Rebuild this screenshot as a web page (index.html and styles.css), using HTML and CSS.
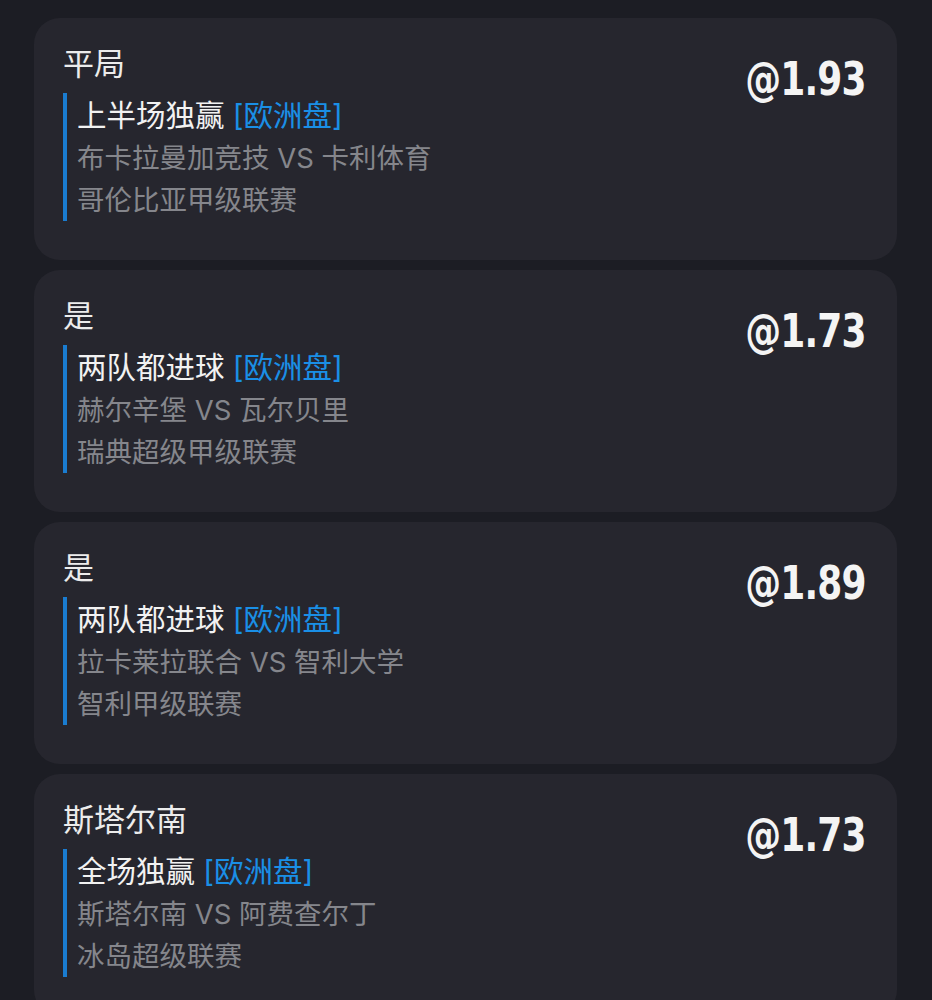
FILE: index.html
```html
<!DOCTYPE html>
<html lang="zh">
<head>
<meta charset="utf-8">
<link rel="stylesheet" href="styles.css">
</head>
<body>
<div class="list">
  <div class="card">
    <div class="info">
      <div class="pick">平局</div>
      <div class="detail">
        <div class="market">上半场独赢 <span class="tag">[欧洲盘]</span></div>
        <div class="match">布卡拉曼加竞技 VS 卡利体育</div>
        <div class="league">哥伦比亚甲级联赛</div>
      </div>
    </div>
    <div class="odds">@1.93</div>
  </div>
  <div class="card">
    <div class="info">
      <div class="pick">是</div>
      <div class="detail">
        <div class="market">两队都进球 <span class="tag">[欧洲盘]</span></div>
        <div class="match">赫尔辛堡 VS 瓦尔贝里</div>
        <div class="league">瑞典超级甲级联赛</div>
      </div>
    </div>
    <div class="odds">@1.73</div>
  </div>
  <div class="card">
    <div class="info">
      <div class="pick">是</div>
      <div class="detail">
        <div class="market">两队都进球 <span class="tag">[欧洲盘]</span></div>
        <div class="match">拉卡莱拉联合 VS 智利大学</div>
        <div class="league">智利甲级联赛</div>
      </div>
    </div>
    <div class="odds">@1.89</div>
  </div>
  <div class="card">
    <div class="info">
      <div class="pick">斯塔尔南</div>
      <div class="detail">
        <div class="market">全场独赢 <span class="tag">[欧洲盘]</span></div>
        <div class="match">斯塔尔南 VS 阿费查尔丁</div>
        <div class="league">冰岛超级联赛</div>
      </div>
    </div>
    <div class="odds">@1.73</div>
  </div>
</div>
</body>
</html>
```

FILE: styles.css
```css
html, body {
  margin: 0;
  padding: 0;
  background: #1c1d24;
}
body {
  font-family: "Inter", "Noto Sans CJK SC", "Noto Sans", sans-serif;
  height: 1000px;
  overflow: hidden;
}
.list {
  display: flex;
  flex-direction: column;
  gap: 10px;
  padding: 18px 35px 0 34px;
}
.card {
  background: #26262e;
  border-radius: 26px;
  height: 242px;
  box-sizing: border-box;
  padding: 25px 31px 0 29px;
  display: flex;
  justify-content: space-between;
  align-items: flex-start;
}
.pick {
  color: #ececec;
  font-size: 31px;
  line-height: 42px;
}
.detail {
  margin-top: 8px;
  border-left: 4px solid #1a7cd0;
  padding-left: 10px;
}
.market {
  color: #f2f2f2;
  font-size: 29.5px;
  line-height: 44px;
}
.tag {
  color: #1a8fe6;
}
.match, .league {
  color: #85868c;
  font-size: 27.5px;
  line-height: 42px;
}
.odds {
  color: #f4f4f4;
  font-family: "DejaVu Sans Condensed", "DejaVu Sans", sans-serif;
  font-weight: bold;
  font-size: 47px;
  line-height: 47px;
  margin-top: 12px;
  transform: scaleX(0.85);
  transform-origin: right center;
  letter-spacing: -1px;
}
```
